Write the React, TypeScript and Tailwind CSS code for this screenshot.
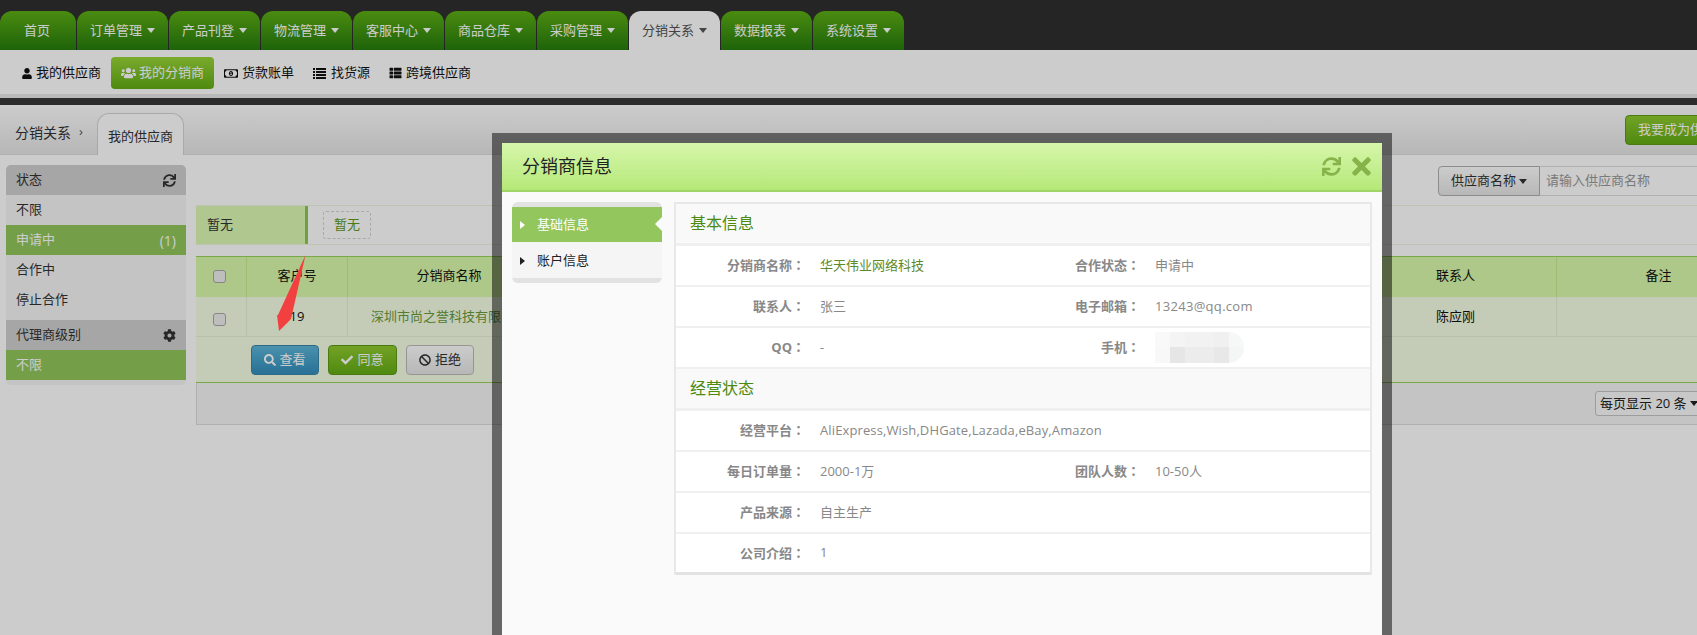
import { FC, ReactNode } from "react";
import {
  FaBan,
  FaCheck,
  FaCog,
  FaRegMoneyBillAlt,
  FaSearch,
  FaSync,
  FaThList,
  FaTimes,
  FaUser,
  FaUsers,
} from "react-icons/fa";

const tabs = ["订单管理", "产品刊登", "物流管理", "客服中心", "商品仓库", "采购管理", "分销关系", "数据报表", "系统设置"];

const Caret: FC<{ className?: string }> = ({ className = "" }) => (
  <span className={`inline-block w-0 h-0 border-x-[4px] border-t-[5px] border-x-transparent border-t-current ${className}`} />
);

const CaretRight: FC = () => (
  <span className="absolute left-[8px] w-0 h-0 border-y-[4px] border-l-[5px] border-y-transparent border-l-current" />
);

const ListIcon: FC = () => (
  <svg className="ml-[19px]" width="13" height="11" viewBox="0 0 13 11" fill="currentColor">
    <rect x="0" y="0" width="2" height="2" />
    <rect x="3" y="0" width="10" height="2" />
    <rect x="0" y="3" width="2" height="2" />
    <rect x="3" y="3" width="10" height="2" />
    <rect x="0" y="6" width="2" height="2" />
    <rect x="3" y="6" width="10" height="2" />
    <rect x="0" y="9" width="2" height="2" />
    <rect x="3" y="9" width="10" height="2" />
  </svg>
);

const Checkbox: FC = () => <span className="block w-[13px] h-[13px] rounded-[3px] border border-[#a8a8a8] bg-[#eeeeee]" />;

const Label: FC<{ text: string; className: string }> = ({ text, className }) => (
  <span className={`${className} shrink-0 text-right font-bold text-[#888]`}>
    {text}
    <span className="font-[family-name:Noto_Sans_CJK_TC]">：</span>
  </span>
);

const Row: FC<{ label: string; children: ReactNode; label2?: string; value2?: ReactNode }> = ({ label, children, label2, value2 }) => (
  <div className="h-[41px] flex items-center bg-white border-b-2 border-[#f0f0f0] last:border-b-[3px] last:border-[#e2e2e2] text-[13px] text-[#888]">
    <div className="w-[349px] shrink-0 flex items-center">
      <Label text={label} className="w-[129px]" />
      <span className="ml-[15px] whitespace-nowrap">{children}</span>
    </div>
    {label2 && (
      <>
        <Label text={label2} className="w-[115px]" />
        <span className="ml-[15px]">{value2}</span>
      </>
    )}
  </div>
);

const SectionTitle: FC<{ title: string }> = ({ title }) => (
  <div className="h-[42px] pl-[14px] pb-[2px] flex items-center bg-[#f9f9f9] border-b-[3px] border-[#f0f0f0] text-[16px] text-[#4d8a10]">{title}</div>
);

const BlurredPhone: FC = () => (
  <div className="w-[89px] h-[31px] flex flex-col rounded-r-2xl overflow-hidden">
    <div className="flex h-[15px]">
      {["#f9f9f9", "#f4f4f4", "#f2f2f2", "#f2f2f2", "#f0f0f0", "#f6f7f7"].map((c, i) => (
        <span key={i} className="w-[15px] h-full" style={{ backgroundColor: c }} />
      ))}
    </div>
    <div className="flex h-[16px]">
      {["#f8f8f8", "#e6e6e6", "#ececec", "#ececec", "#e8e8e8", "#f4f6f6"].map((c, i) => (
        <span key={i} className="w-[15px] h-full" style={{ backgroundColor: c }} />
      ))}
    </div>
  </div>
);

export default function App() {
  return (
    <div className="relative h-[635px] w-[1697px] overflow-hidden bg-white text-[13px] text-[#333] font-[family-name:Open_Sans,Noto_Sans_CJK_SC,sans-serif]">
      {/* top tabs */}
      <div className="h-[50px] pt-[11px] bg-[#2f2f2f] flex gap-px">
        <div className="w-[76px] pr-[2px] rounded-t-[12px] bg-linear-to-b from-[#5daf14] to-[#247d0d] text-white flex items-center justify-center">首页</div>
        {tabs.map((t) => {
          const active = t === "分销关系";
          return (
            <div
              key={t}
              className={`w-[91px] rounded-t-[12px] flex items-center justify-center gap-[5px] ${
                active ? "bg-white text-[#555]" : "bg-linear-to-b from-[#5daf14] to-[#247d0d] text-white"
              }`}
            >
              {t}
              <Caret />
            </div>
          );
        })}
      </div>

      {/* sub nav */}
      <div className="h-[44px] pt-[2px] bg-white flex items-center pl-[22px] text-[#111]">
        <FaUser className="w-[10px] h-[11px]" />
        <span className="ml-[4px]">我的供应商</span>
        <div className="ml-[10px] w-[103px] h-[32px] rounded-[4px] bg-linear-to-b from-[#98d537] to-[#63ad14] text-white flex items-center pl-[10px]">
          <FaUsers className="w-[15px] h-[14px]" />
          <span className="ml-[3px]">我的分销商</span>
        </div>
        <FaRegMoneyBillAlt className="ml-[10px] w-[14px] h-[13px]" />
        <span className="ml-[4px]">货款账单</span>
        <ListIcon />
        <span className="ml-[5px]">找货源</span>
        <FaThList className="ml-[19px] w-[13px] h-[12px]" />
        <span className="ml-[4px]">跨境供应商</span>
      </div>
      <div className="h-[4px] bg-[#e6e6e6]" />
      <div className="h-[7px] bg-[#373737]" />

      {/* breadcrumb */}
      <div className="h-[50px] rounded-tl-md bg-linear-to-b from-white to-[#e6e6e6] border-b border-[#dcdcdc] flex items-start relative">
        <span className="ml-[15px] mt-[17px] w-[56px] text-[14px]">分销关系</span>
        <span className="ml-[8px] mt-[17px] w-[6px] text-[#555]">›</span>
        <div className="ml-[12px] mt-[8px] w-[87px] h-[42px] bg-white border border-b-0 border-[#d4d4d4] rounded-t-[12px] flex items-center justify-center pt-[4px]">我的供应商</div>
        <div className="absolute left-[1625px] top-[10px] w-[120px] h-[30px] rounded-[4px] border border-[#5a9a14] bg-linear-to-b from-[#8fcb2e] to-[#63ad14] text-white flex items-center pl-[12px]">我要成为供应商</div>
      </div>

      <div className="flex items-start">
        {/* left filters */}
        <div className="ml-[6px] mt-[10px] w-[180px] shrink-0 rounded-[5px] bg-[#f5f5f5] pb-[5px] overflow-hidden">
          <div className="h-[30px] px-[10px] bg-[#d0d0d0] flex items-center justify-between">
            状态
            <FaSync className="w-[13px] h-[13px] text-[#333]" />
          </div>
          <div className="h-[30px] px-[10px] flex items-center">不限</div>
          <div className="h-[30px] px-[10px] bg-[#92c75a] text-white flex items-center justify-between">
            申请中<span className="text-[14px]">(1)</span>
          </div>
          <div className="h-[30px] px-[10px] flex items-center">合作中</div>
          <div className="h-[30px] px-[10px] flex items-center">停止合作</div>
          <div className="h-[5px]" />
          <div className="h-[30px] px-[10px] bg-[#d0d0d0] flex items-center justify-between">
            代理商级别
            <FaCog className="w-[13px] h-[13px] text-[#333]" />
          </div>
          <div className="h-[30px] px-[10px] bg-[#92c75a] text-white flex items-center">不限</div>
        </div>

        {/* main */}
        <div className="ml-[10px] w-[1564px] shrink-0">
          <div className="h-[50px] pt-[11px] pl-[1242px] flex items-start">
            <div className="w-[102px] h-[30px] rounded-l-[4px] border border-[#b0b0b0] bg-linear-to-b from-white to-[#e6e6e6] flex items-center justify-center gap-[3px]">
              供应商名称
              <Caret />
            </div>
            <div className="w-[220px] h-[30px] border border-l-0 border-[#dcdcdc] flex items-center pl-[6px] text-[#999]">请输入供应商名称</div>
          </div>

          <div className="h-[40px] border-y border-[#eef5df] flex items-center">
            <div className="w-[112px] h-full pl-[11px] bg-[#dcfab4] border-r-[3px] border-[#8cc850] flex items-center">暂无</div>
            <div className="ml-[15px] w-[48px] h-[28px] rounded-[3px] border border-dashed border-[#d4d4d4] text-[#5d9a20] flex items-center justify-center">暂无</div>
          </div>

          <div className="mt-[11px] border-b border-[#98d25c]">
            <div className="h-[41px] flex bg-[#d9faaa] border-t border-[#98d25c] text-[#111]">
              <div className="w-[51px] pr-[3px] pb-[2px] flex items-center justify-center border-r border-[#c5ea90]"><Checkbox /></div>
              <div className="w-[101px] pb-[2px] flex items-center justify-center border-r border-[#c5ea90]">客户号</div>
              <div className="w-[202px] pb-[2px] flex items-center justify-center">分销商名称</div>
              <div className="w-[805px]" />
              <div className="w-[202px] pb-[2px] flex items-center justify-center border-r border-[#c5ea90]">联系人</div>
              <div className="w-[203px] pb-[2px] flex items-center justify-center">备注</div>
            </div>
            <div className="h-[40px] flex bg-[#f6ffe7] border-b border-[#e6efd8] text-[#111]">
              <div className="w-[51px] pr-[3px] pt-[5px] flex items-center justify-center border-r border-[#e6efd8]"><Checkbox /></div>
              <div className="w-[101px] flex items-center justify-center border-r border-[#e6efd8]">19</div>
              <div className="w-[202px] flex items-center justify-center text-[#6a9a3a] whitespace-nowrap">深圳市尚之誉科技有限公司</div>
              <div className="w-[805px]" />
              <div className="w-[202px] flex items-center justify-center border-r border-[#e6efd8]">陈应刚</div>
              <div className="w-[203px]" />
            </div>
            <div className="h-[45px] pl-[55px] flex items-center gap-[9px] bg-[#f6ffe7]">
              <button className="w-[68px] h-[30px] rounded-[4px] border border-[#3a87a8] bg-linear-to-b from-[#5cb6d8] to-[#328ebc] text-white flex items-center justify-center gap-[3px]">
                <FaSearch className="w-[12px] h-[12px]" />查看
              </button>
              <button className="w-[69px] h-[30px] rounded-[4px] border border-[#5a9a14] bg-linear-to-b from-[#8fcb2e] to-[#63ad14] text-white flex items-center justify-center gap-[4px]">
                <FaCheck className="w-[12px] h-[12px]" />同意
              </button>
              <button className="w-[68px] h-[30px] rounded-[4px] border border-[#bbb] bg-linear-to-b from-white to-[#e6e6e6] text-[#333] flex items-center justify-center gap-[4px]">
                <FaBan className="w-[12px] h-[12px]" />拒绝
              </button>
            </div>
          </div>

          <div className="h-[42px] bg-[#f5f5f5] border-b border-[#dcdcdc] border-l flex items-center pl-[1398px]">
            <div className="w-[110px] h-[25px] shrink-0 rounded-[3px] border border-[#c5c5c5] bg-[#fafafa] text-[#222] flex items-center pl-[4px] gap-[3px] text-[13px] whitespace-nowrap">
              每页显示 20 条<Caret />
            </div>
          </div>
        </div>
      </div>

      {/* dim layer */}
      <div className="absolute inset-0 bg-black/20" />

      {/* annotation arrow */}
      <svg className="absolute left-[270px] top-[250px]" width="40" height="85" viewBox="0 0 40 85">
        <path d="M35.5 5 L21 69 L8 65 Z M8 65 L7 65 L9 81 L21 69 Z" fill="#f23f3f" />
      </svg>

      {/* modal */}
      <div className="absolute left-[492px] top-[133px] w-[900px] h-[540px] border-[10px] border-black/50 bg-[#fafafa] bg-clip-padding">
        <div className="h-[49px] bg-linear-to-b from-[#d6f6aa] to-[#b5e878] border-b-2 border-[#9fd466] flex items-center justify-between pl-[20px] pr-[7px]">
          <span className="text-[18px] text-[#222]">分销商信息</span>
          <div className="flex items-center gap-[7px] text-[#86b34a]">
            <FaSync className="w-[19px] h-[19px]" />
            <FaTimes className="w-[27px] h-[27px]" />
          </div>
        </div>
        <div className="flex items-start pt-[10px] pl-[10px]">
          <div className="w-[150px] shrink-0 rounded-[6px] overflow-hidden bg-[#e2e2e2] py-[5px]">
            <div className="relative h-[35px] bg-[#94c65e] text-white flex items-center pl-[25px]">
              <CaretRight />
              基础信息
              <span className="absolute right-0 top-[10px] border-y-[7px] border-r-[7px] border-y-transparent border-r-[#fafafa]" />
            </div>
            <div className="relative h-[36px] pt-[2px] bg-[#f5f5f5] text-[#222] flex items-center pl-[25px]">
              <CaretRight />
              账户信息
            </div>
          </div>
          <div className="ml-[12px] w-[698px] shrink-0 border-x-2 border-t-2 border-[#e8e8e8]">
            <SectionTitle title="基本信息" />
            <Row label="分销商名称" label2="合作状态" value2="申请中">
              <span className="text-[#5d8a2a]">华天伟业网络科技</span>
            </Row>
            <Row label="联系人" label2="电子邮箱" value2={<span className="tracking-[0.3px]">13243@qq.com</span>}>张三</Row>
            <Row label="QQ" label2="手机" value2={<BlurredPhone />}>-</Row>
            <SectionTitle title="经营状态" />
            <Row label="经营平台"><span className="tracking-[0.12px]">AliExpress,Wish,DHGate,Lazada,eBay,Amazon</span></Row>
            <Row label="每日订单量" label2="团队人数" value2="10-50人">2000-1万</Row>
            <Row label="产品来源">自主生产</Row>
            <Row label="公司介绍">1</Row>
          </div>
        </div>
      </div>
    </div>
  );
}
